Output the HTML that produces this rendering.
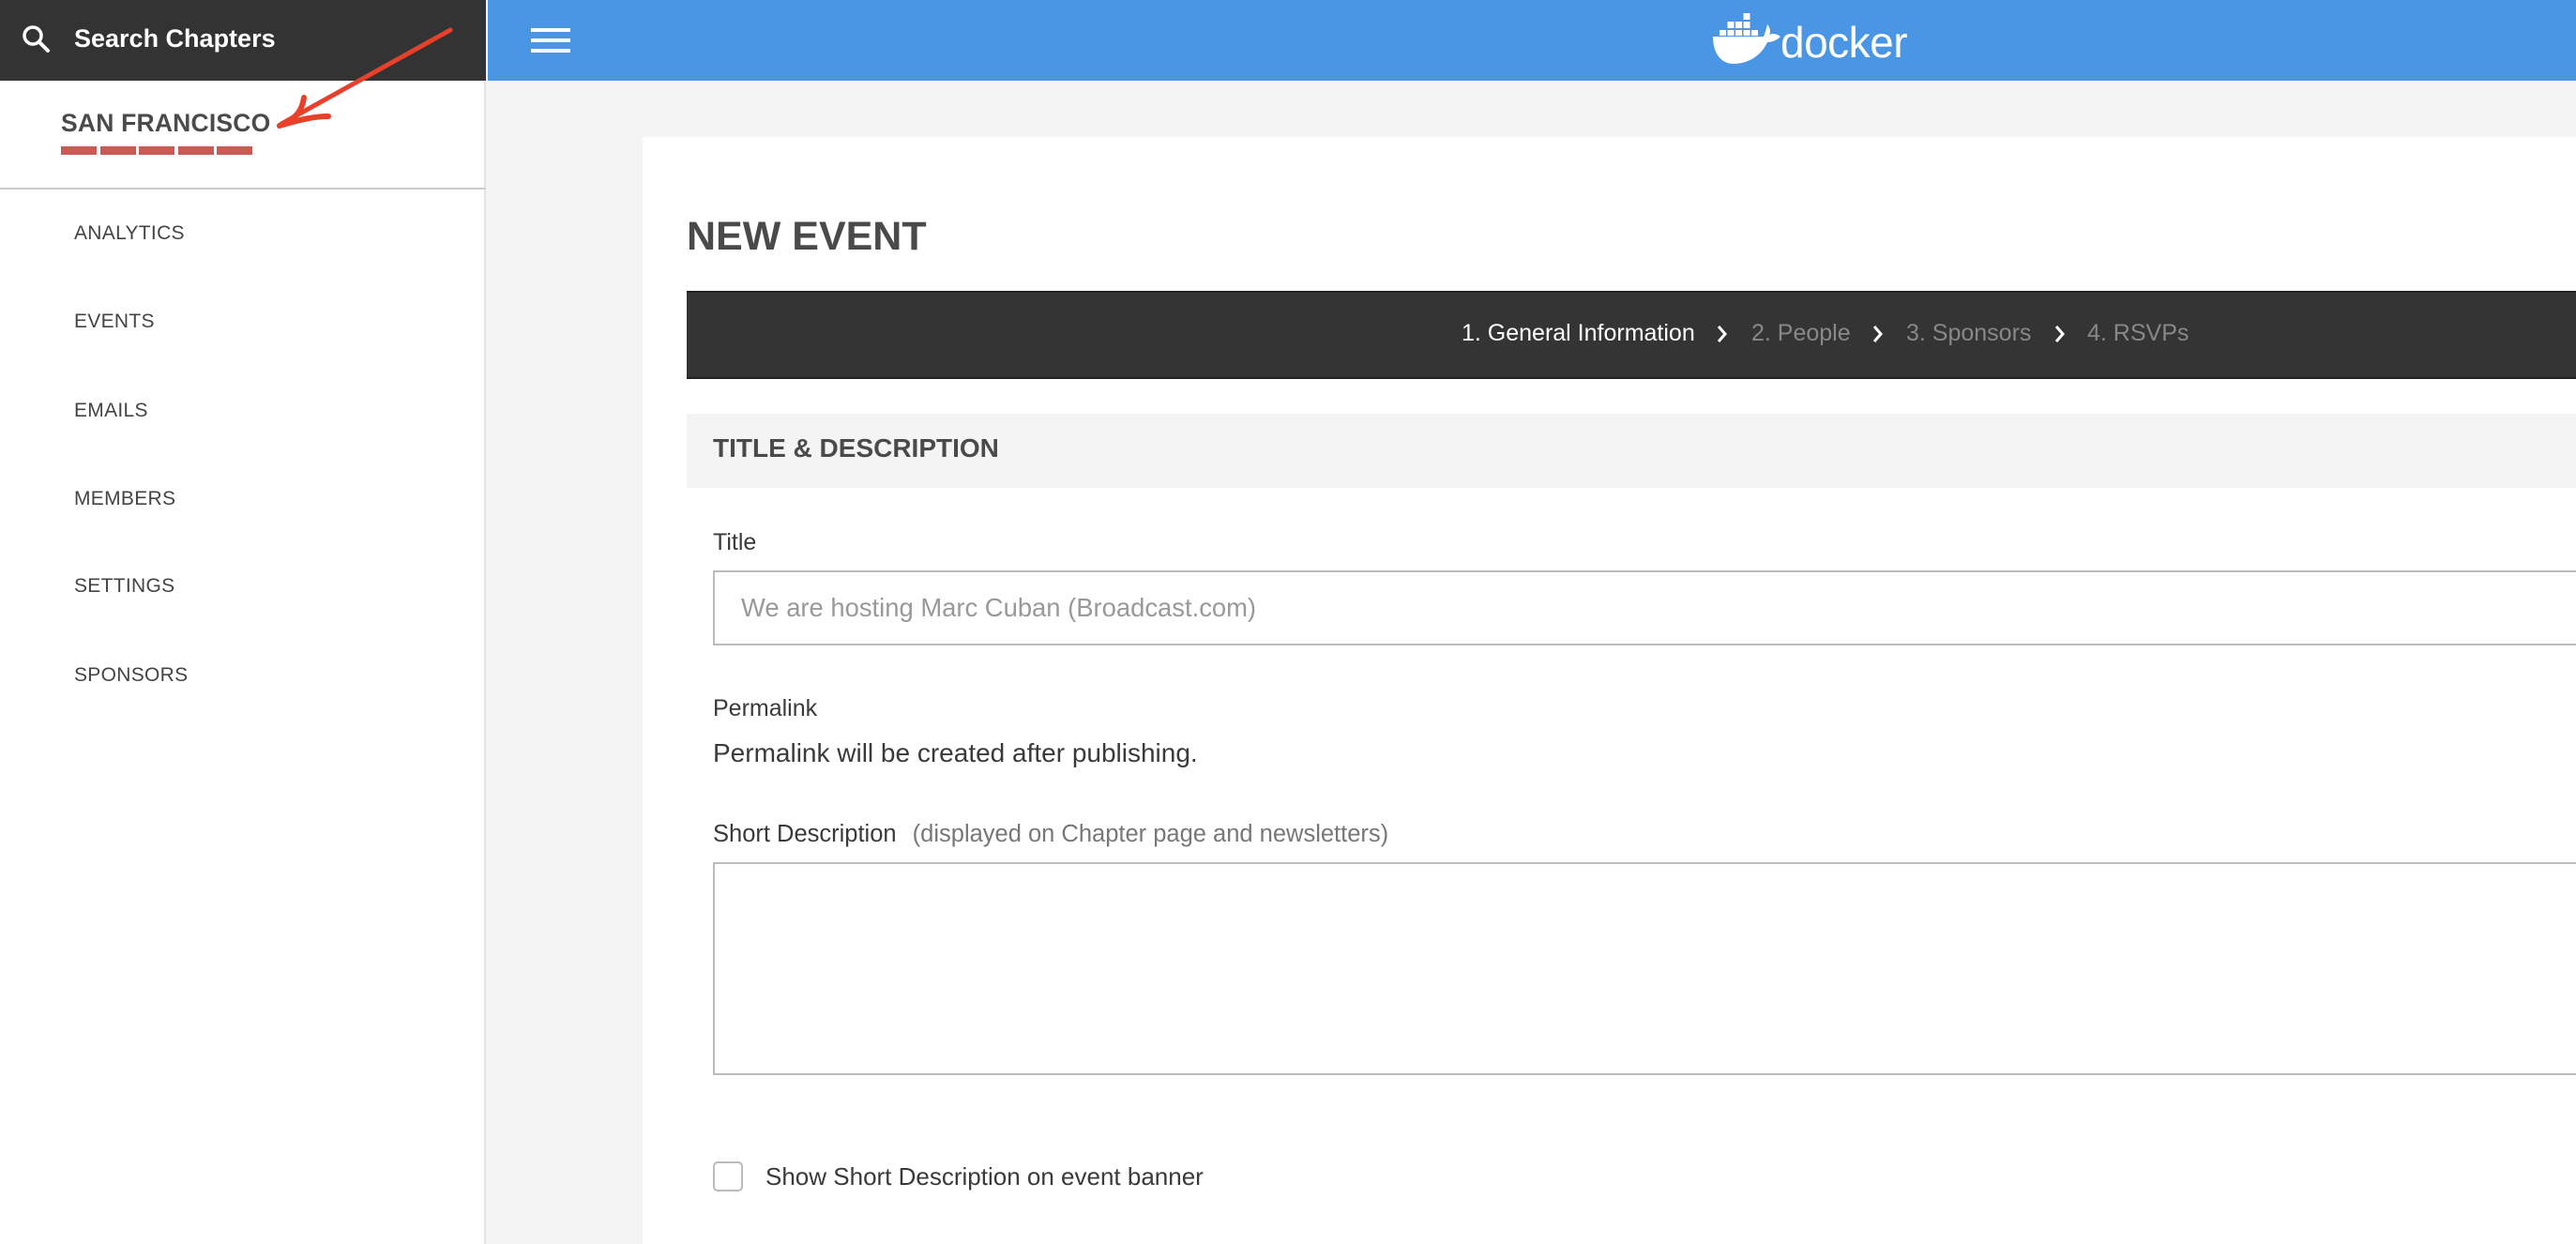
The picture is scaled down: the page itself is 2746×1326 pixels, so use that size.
<!DOCTYPE html>
<html><head><meta charset="utf-8">
<style>
*{margin:0;padding:0;box-sizing:border-box}
html,body{width:2746px;height:1326px;overflow:hidden;background:#f4f4f4;font-family:"Liberation Sans",sans-serif}
.abs{position:absolute}
#side{left:0;top:0;width:518px;height:1326px;background:#fff;border-right:2px solid #e2e2e2}
#sh{left:0;top:0;width:518px;height:86px;background:#333}
.nav{position:absolute;left:79px;font-size:21px;color:#444;letter-spacing:0.3px}
#top{left:520px;top:0;width:2226px;height:86px;background:#4a96e4}
#card{left:685px;top:146px;width:2061px;height:1180px;background:#fff}
.lbl{position:absolute;left:760px;font-size:25px;color:#3a3a3a}
</style></head><body>
<div id="side" class="abs"></div>
<div id="sh" class="abs"></div>
<svg class="abs" style="left:20px;top:24px" width="40" height="40" viewBox="0 0 40 40"><circle cx="15" cy="14" r="9" fill="none" stroke="#fff" stroke-width="3.5"/><line x1="21.5" y1="20.5" x2="31" y2="30" stroke="#fff" stroke-width="4" stroke-linecap="round"/></svg>
<div class="abs" style="left:79px;top:26px;font-size:27px;font-weight:bold;color:#fff">Search Chapters</div>
<div class="abs" style="left:65px;top:116px;font-size:26.5px;font-weight:bold;color:#4a4a4a;letter-spacing:0.2px">SAN FRANCISCO</div>
<div class="abs" style="left:65px;top:156px;width:38px;height:9px;background:#c95b55"></div>
<div class="abs" style="left:107px;top:156px;width:38px;height:9px;background:#c95b55"></div>
<div class="abs" style="left:148px;top:156px;width:38px;height:9px;background:#c95b55"></div>
<div class="abs" style="left:190px;top:156px;width:38px;height:9px;background:#c95b55"></div>
<div class="abs" style="left:231px;top:156px;width:38px;height:9px;background:#c95b55"></div>
<div class="abs" style="left:0;top:200px;width:518px;height:2px;background:#ccc"></div>
<div class="nav" style="top:237px">ANALYTICS</div>
<div class="nav" style="top:331px">EVENTS</div>
<div class="nav" style="top:426px">EMAILS</div>
<div class="nav" style="top:520px">MEMBERS</div>
<div class="nav" style="top:613px">SETTINGS</div>
<div class="nav" style="top:708px">SPONSORS</div>

<div id="top" class="abs"></div>
<div class="abs" style="left:566px;top:30px;width:42px;height:4px;background:#fff"></div>
<div class="abs" style="left:566px;top:41px;width:42px;height:4px;background:#fff"></div>
<div class="abs" style="left:566px;top:52px;width:42px;height:4px;background:#fff"></div>
<svg class="abs" style="left:1820px;top:0px" width="82" height="76" viewBox="0 0 82 76">
<g fill="#fff">
<rect x="38.5" y="14" width="7" height="7"/>
<rect x="21.5" y="23" width="7" height="7"/><rect x="30" y="23" width="7" height="7"/><rect x="38.5" y="23" width="7" height="7"/>
<rect x="13" y="32" width="7" height="6"/><rect x="21.5" y="32" width="7" height="6"/><rect x="30" y="32" width="7" height="6"/><rect x="38.5" y="32" width="7" height="6"/><rect x="47" y="32" width="7" height="6"/>
<path d="M6 39 H60 C62 34 63 30 64 26 C67 30 68 34 66 37 C70 35 74 36 78 39 C74 43 69 45 64 45 C58 58 45 68 28 68 C14 68 6 56 6 39 Z"/>
</g></svg>
<div class="abs" style="left:1898px;top:18px;font-size:46px;color:#fff;letter-spacing:-0.5px">docker</div>

<div id="card" class="abs"></div>
<div class="abs" style="left:732px;top:228px;font-size:43px;font-weight:bold;color:#4a4a4a">NEW EVENT</div>
<div class="abs" style="left:732px;top:310px;width:2014px;height:94px;background:#343434;border-top:2px solid #222;border-bottom:2px solid #222"></div>
<div class="abs" style="left:1558px;top:341px;font-size:25px;color:#fff;white-space:nowrap">1. General Information</div>
<div class="abs" style="left:1867px;top:341px;font-size:25px;color:#888;white-space:nowrap">2. People</div>
<div class="abs" style="left:2032px;top:341px;font-size:25px;color:#888;white-space:nowrap">3. Sponsors</div>
<div class="abs" style="left:2225px;top:341px;font-size:25px;color:#888;white-space:nowrap">4. RSVPs</div>
<svg class="abs" style="left:1828px;top:343px" width="400" height="26" viewBox="0 0 400 26" fill="none" stroke="#fff" stroke-width="3"><path d="M4 5 L11 13 L4 21"/><path d="M170 5 L177 13 L170 21"/><path d="M364 5 L371 13 L364 21"/></svg>
<div class="abs" style="left:732px;top:441px;width:2014px;height:79px;background:#f4f4f4"></div>
<div class="abs" style="left:760px;top:462px;font-size:28px;font-weight:bold;color:#4a4a4a">TITLE &amp; DESCRIPTION</div>
<div class="lbl" style="top:564px">Title</div>
<div class="abs" style="left:760px;top:608px;width:2000px;height:80px;border:2px solid #bbb"></div>
<div class="abs" style="left:790px;top:632px;font-size:27.4px;color:#999">We are hosting Marc Cuban (Broadcast.com)</div>
<div class="lbl" style="top:741px">Permalink</div>
<div class="abs" style="left:760px;top:787px;font-size:28px;color:#3a3a3a">Permalink will be created after publishing.</div>
<div class="lbl" style="top:875px;font-size:25.5px">Short Description <span style="color:#777;margin-left:10px">(displayed on Chapter page and newsletters)</span></div>
<div class="abs" style="left:760px;top:919px;width:2000px;height:227px;border:2px solid #bbb"></div>
<div class="abs" style="left:760px;top:1238px;width:32px;height:32px;border:2px solid #bbb;border-radius:5px"></div>
<div class="abs" style="left:816px;top:1239px;font-size:26px;color:#3a3a3a">Show Short Description on event banner</div>

<svg class="abs" style="left:0;top:0" width="520" height="200" viewBox="0 0 520 200" fill="none" stroke="#e8402a" stroke-linecap="round" stroke-linejoin="round">
<path d="M480 32 L300 132" stroke-width="5"/>
<path d="M324 104 C322 118 316 126 298 134 C318 128 334 124 350 124" stroke-width="6"/>
</svg>
</body></html>
